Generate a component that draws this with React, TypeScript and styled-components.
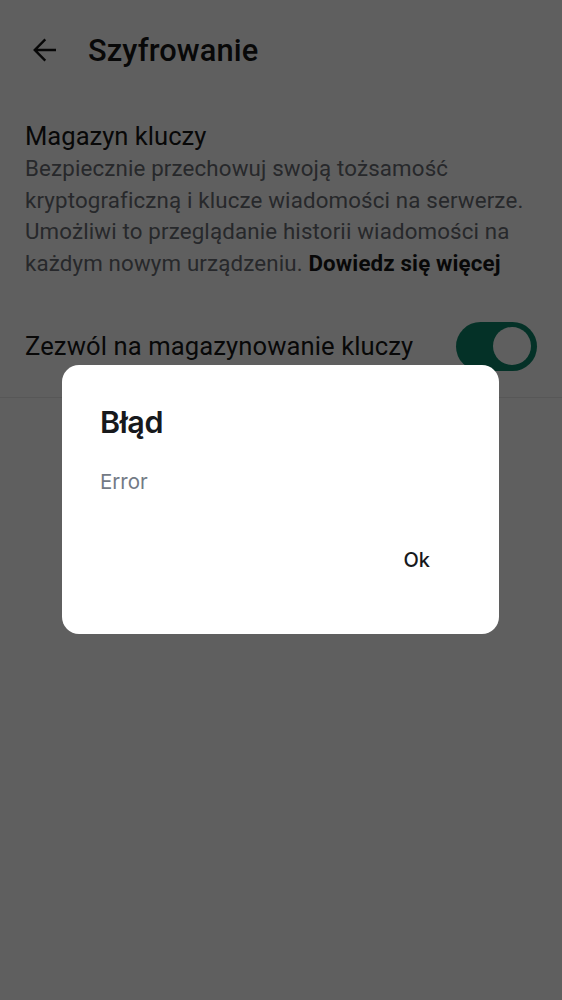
import React from "react";
import styled, { createGlobalStyle } from "styled-components";

const Global = createGlobalStyle`
  html, body { margin: 0; padding: 0; background: #ffffff; }
  body { font-family: Roboto, "Noto Sans", sans-serif; }
`;

const Page = styled.div`
  width: 562px;
  height: 1000px;
  background: #ffffff;
  position: relative;
  overflow: hidden;
`;

const TopBar = styled.header`
  height: 100px;
  display: flex;
  align-items: center;
  padding: 0 0 0 30px;
  gap: 31px;
  box-sizing: border-box;
`;

const BackButton = styled.button`
  width: 27px;
  height: 27px;
  padding: 0;
  border: 0;
  background: none;
  display: flex;
  align-items: center;
  justify-content: center;
  color: #151515;
`;

const Title = styled.h1`
  margin: 0;
  font-size: 30.8px;
  font-weight: 500;
  color: #171717;
  letter-spacing: 0.1px;
`;

const Section = styled.section`
  padding: 20px 25px 0 25px;
`;

const SectionTitle = styled.h2`
  margin: 0;
  font-size: 25.6px;
  font-weight: 400;
  color: #171717;
  line-height: 33px;
`;

const Description = styled.p`
  margin: 0;
  font-size: 22.3px;
  line-height: 31.7px;
  color: #6a6d73;
  letter-spacing: 0.15px;
`;

const Strong = styled.strong`
  font-weight: 700;
  color: #171717;
`;

const SettingRow = styled.div`
  margin-top: 42px;
  padding: 0 25px 26px 25px;
  display: flex;
  align-items: center;
  justify-content: space-between;
  border-bottom: 1px solid #e8e8e8;
`;

const SettingLabel = styled.span`
  font-size: 25.6px;
  color: #171717;
  letter-spacing: 0.1px;
`;

const Track = styled.div<{ $on: boolean }>`
  width: 81px;
  height: 49px;
  border-radius: 25px;
  background: ${(p) => (p.$on ? "#0b8468" : "#cccccc")};
  display: flex;
  align-items: center;
  justify-content: ${(p) => (p.$on ? "flex-end" : "flex-start")};
  padding: 0 6px;
  box-sizing: border-box;
`;

const Thumb = styled.div`
  width: 38px;
  height: 38px;
  border-radius: 50%;
  background: #ffffff;
`;

const Scrim = styled.div`
  position: absolute;
  inset: 0;
  background: rgba(0, 0, 0, 0.627);
`;

const Dialog = styled.div`
  position: absolute;
  left: 62px;
  top: 365px;
  width: 437px;
  height: 269px;
  background: #ffffff;
  border-radius: 17px;
  box-sizing: border-box;
  padding: 38px 38px 0 38px;
  display: flex;
  flex-direction: column;
  font-family: Inter, Roboto, sans-serif;
`;

const DialogTitle = styled.h3`
  margin: 0;
  font-size: 30.5px;
  font-weight: 600;
  color: #17191c;
  line-height: 37px;
  letter-spacing: -0.4px;
`;

const DialogBody = styled.p`
  margin: 27px 0 0 0;
  font-size: 20.5px;
  line-height: 30px;
  color: #737a85;
`;

const Actions = styled.div`
  margin-top: 48px;
  display: flex;
  justify-content: flex-end;
  padding-right: 31px;
`;

const TextButton = styled.button`
  border: 0;
  background: none;
  padding: 0;
  font-family: Inter, Roboto, sans-serif;
  font-size: 20px;
  font-weight: 500;
  color: #17191c;
  line-height: 30px;
`;

export default function App() {
  return (
    <Page>
      <Global />
      <TopBar>
        <BackButton aria-label="Wstecz">
          <svg width="24" height="24" viewBox="4 4 16 16" fill="currentColor">
            <path d="M20 11.1H7.83l5.59-5.59L12.3 4.4l-7.6 7.6 7.6 7.6 1.12-1.12L7.83 12.9H20v-1.8z" />
          </svg>
        </BackButton>
        <Title>Szyfrowanie</Title>
      </TopBar>
      <Section>
        <SectionTitle>Magazyn kluczy</SectionTitle>
        <Description>
          Bezpiecznie przechowuj swoją tożsamość kryptograficzną i klucze
          wiadomości na serwerze. Umożliwi to przeglądanie historii wiadomości
          na każdym nowym urządzeniu. <Strong>Dowiedz się więcej</Strong>
        </Description>
      </Section>
      <SettingRow>
        <SettingLabel>Zezwól na magazynowanie kluczy</SettingLabel>
        <Track $on>
          <Thumb />
        </Track>
      </SettingRow>
      <Scrim />
      <Dialog role="dialog">
        <DialogTitle>Błąd</DialogTitle>
        <DialogBody>Error</DialogBody>
        <Actions>
          <TextButton>Ok</TextButton>
        </Actions>
      </Dialog>
    </Page>
  );
}
